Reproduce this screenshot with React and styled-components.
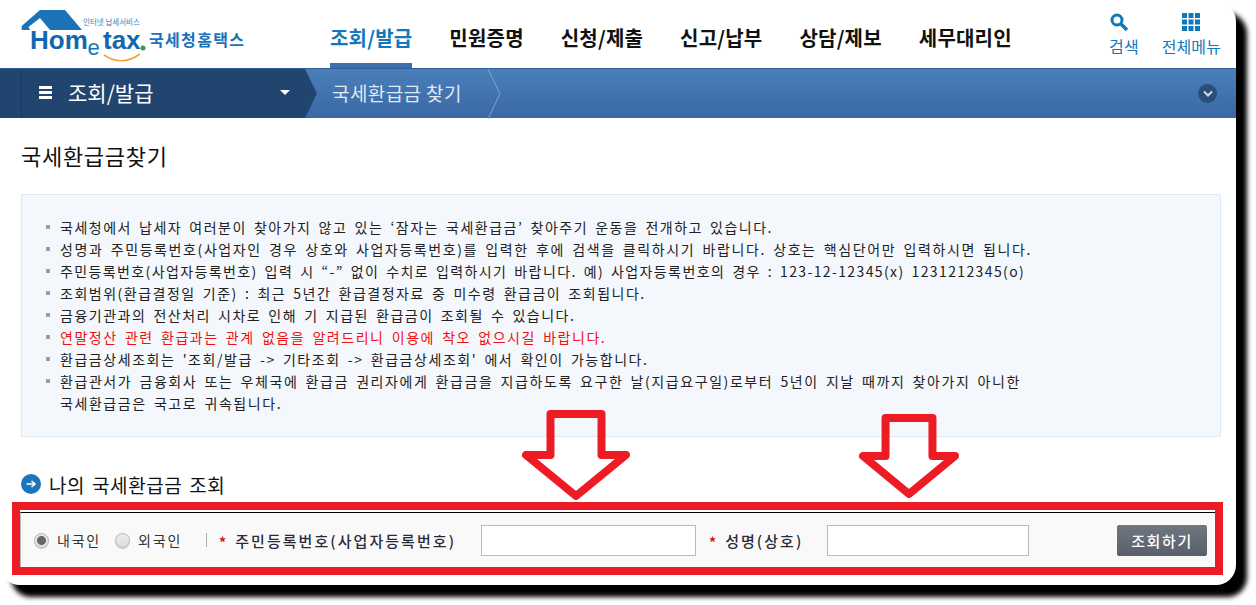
import React from "react";
import styled, { createGlobalStyle } from "styled-components";

const KR = `"Noto Sans CJK KR", "Liberation Sans", sans-serif`;

const GlobalStyle = createGlobalStyle`
  html, body {
    margin: 0;
    height: 100%;
    background: #fff;
    overflow: hidden;
  }
  body {
    font-family: ${KR};
  }
`;

const Card = styled.div`
  width: 1236px;
  height: 585px;
  background: #fff;
  border-radius: 0 22px 20px 20px;
  box-shadow: 11px 12px 5px #000;
  overflow: hidden;
`;

const Header = styled.header`
  display: flex;
  height: 68px;
  padding-left: 20px;
  align-items: stretch;
`;

const LogoBox = styled.div`
  width: 310px;
  flex: none;
`;

const Nav = styled.nav`
  display: flex;
  gap: 37px;
  flex: 1;
`;

const NavItem = styled.a`
  display: flex;
  align-items: center;
  height: 68px;
  padding-top: 12px;
  box-sizing: border-box;
  font-size: 20px;
  font-weight: 700;
  letter-spacing: 0.2px;
  color: ${(p) => (p.$active ? "#1278bd" : "#111")};
  border-bottom: ${(p) => (p.$active ? "5px solid #3f70ae" : "0")};
  padding-bottom: ${(p) => (p.$active ? "0" : "5px")};
`;

const Tools = styled.div`
  display: flex;
  gap: 23px;
  padding: 13px 15px 0 0;
`;

const Tool = styled.a`
  display: flex;
  flex-direction: column;
  align-items: center;
  gap: 5px;
  font-size: 16px;
  letter-spacing: 0.1px;
  line-height: 20px;
  color: #1278bd;
`;

const SearchGlyph = styled.svg`
  margin-right: 10px;
`;

const SubNav = styled.div`
  display: flex;
  align-items: center;
  height: 50px;
  background: linear-gradient(#4a7fba, #3a68a4);
  border-top: 1px solid #2f5f96;
  box-sizing: border-box;
  padding-right: 19px;
`;

const MenuPanel = styled.div`
  display: flex;
  align-items: center;
  width: 318px;
  height: 100%;
  flex: none;
  box-sizing: border-box;
  padding: 0 0 3px 39px;
  background: linear-gradient(90deg, #21456f 21px, #1b3a60 21px, #1b3a60 22px, #21456f 22px);
  color: #fff;
  font-size: 21px;
  clip-path: polygon(0 0, 305px 0, 317px 50%, 305px 100%, 0 100%);
`;

const Burger = styled.span`
  width: 13px;
  height: 3px;
  margin-right: 16px;
  background: #fff;
  box-shadow: 0 -5px 0 #fff, 0 5px 0 #fff;
`;

const MenuTitle = styled.span`
  flex: none;
  width: 212px;
`;

const Caret = styled.span`
  width: 0;
  height: 0;
  border: 5px solid transparent;
  border-top: 5px solid #fff;
  border-bottom: 0;
`;

const Crumb = styled.span`
  margin-left: 14px;
  padding-bottom: 3px;
  width: 155px;
  color: #dfe9f5;
  font-size: 19px;
  letter-spacing: 0.4px;
  flex: none;
`;

const RoundBtn = styled.span`
  display: flex;
  align-items: center;
  justify-content: center;
  width: 19px;
  height: 19px;
  margin-left: auto;
  border-radius: 50%;
  background: #2a4d7b;
`;

const Main = styled.main`
  padding: 0 15px 0 21px;
`;

const Title = styled.h1`
  margin: 0;
  padding-top: 22px;
  height: 76px;
  box-sizing: border-box;
  font-size: 22px;
  line-height: 30px;
  letter-spacing: 0.7px;
  font-weight: 400;
  color: #111;
`;

const InfoBox = styled.div`
  height: 243px;
  box-sizing: border-box;
  padding: 21px 0 0 24px;
  background: #f4f7fc;
  border: 1px solid #dfe8f3;
`;

const InfoList = styled.ul`
  margin: 0;
  padding: 0;
  list-style: none;
`;

const InfoItem = styled.li`
  position: relative;
  padding-left: 14px;
  font-size: 14px;
  line-height: 22px;
  letter-spacing: ${(p) => p.$ls || 1.6}px;
  word-spacing: 2.5px;
  color: ${(p) => (p.$alert ? "#f01010" : "#222")};
  white-space: nowrap;

  &::before {
    content: "";
    position: absolute;
    left: 0;
    top: 9px;
    width: 4px;
    height: 4px;
    background: #9aa0a6;
  }
`;

const Lookup = styled.section`
  position: relative;
`;

const SectionHead = styled.h2`
  display: flex;
  align-items: center;
  gap: 8px;
  height: 65px;
  margin: 0;
  padding-top: 29px;
  box-sizing: border-box;
  font-size: 19px;
  letter-spacing: 0.6px;
  word-spacing: 2px;
  font-weight: 400;
  color: #111;
`;

const ArrowMark = styled.svg`
  position: absolute;
  top: ${(p) => p.$top}px;
  left: ${(p) => p.$left}px;
`;

const RedFrame = styled.div`
  margin-left: -9px;
  width: 1211px;
  height: 73px;
  box-sizing: border-box;
  border: 8px solid #ed1c24;
`;

const FormRow = styled.form`
  display: flex;
  align-items: center;
  height: 55px;
  margin-top: 2px;
  box-sizing: border-box;
  padding: 0 8px 0 13px;
  background: #f9f9f9;
  border-top: 1px solid #000;
  border-left: 1px solid #bbb;
`;

const RadioLabel = styled.label`
  display: flex;
  align-items: center;
  gap: 8px;
  margin-right: ${(p) => p.$gap}px;
  font-size: 14px;
  letter-spacing: 1.8px;
  color: #333;
`;

const Radio = styled.input`
  appearance: none;
  width: 15px;
  height: 15px;
  margin: 0;
  border-radius: 50%;
  border: 1px solid #b5b5b5;
  box-shadow: 0 1px 1px #ccc;
  background: ${(p) =>
    p.checked
      ? "radial-gradient(circle, #666 0 4px, #e4e4e4 5px)"
      : "linear-gradient(#ececec, #dcdcdc)"};
`;

const Divider = styled.span`
  width: 1px;
  height: 14px;
  margin-right: 12px;
  background: #aaa;
`;

const Star = styled.span`
  color: #d5121a;
  font-size: 14px;
  font-weight: 700;
  padding-top: 4px;
  margin-right: 9px;
`;

const FieldLabel = styled.label`
  font-size: 15px;
  font-weight: 500;
  letter-spacing: 2.05px;
  color: #2a2a3a;
  margin-right: ${(p) => p.$gap}px;
  white-space: nowrap;
`;

const TextInput = styled.input`
  width: ${(p) => p.$width}px;
  height: 31px;
  box-sizing: border-box;
  margin-right: ${(p) => p.$gap}px;
  border: 1px solid #bbb;
  background: #fff;
`;

const SearchButton = styled.button`
  width: 90px;
  height: 31px;
  margin-left: auto;
  border: 0;
  border-radius: 2px;
  background: linear-gradient(#6f7680, #5a606b);
  color: #fff;
  font-family: ${KR};
  font-size: 15px;
  font-weight: 500;
  letter-spacing: 1.6px;
`;

const Logo = () => (
  <svg width="240" height="64" viewBox="0 0 240 64">
    <path d="M1.7 26 L20 10 L45 10 L62 30 L30 30 L20 18 L8.5 27 L10 30 L1.7 30 Z" fill="#1a72b8" />
    <text x="63" y="25" fontSize="7.5" fill="#3a7fc0" fontFamily={KR}>
      인터넷 납세서비스
    </text>
    <text x="10" y="49" fontSize="26" fontWeight="700" fill="#1268b0" fontFamily="Liberation Sans">
      Hom
    </text>
    <text x="67.5" y="55" fontSize="22" fill="#1278bd" fontFamily="Liberation Sans">
      e
    </text>
    <text x="83" y="49" fontSize="26" fontWeight="700" fill="#1268b0" fontFamily="Liberation Sans">
      tax
    </text>
    <circle cx="123" cy="48" r="2.5" fill="#3a9a3a" />
    <path d="M84 55 Q102 67 120 54" fill="none" stroke="#f3a63a" strokeWidth="1.6" />
    <text x="129" y="46" fontSize="16" fontWeight="700" fill="#1a72b8" fontFamily={KR} textLength="95">
      국세청홈택스
    </text>
  </svg>
);

const SearchIcon = () => (
  <SearchGlyph width="18" height="18" viewBox="0 0 18 18">
    <circle cx="7" cy="7" r="5" fill="none" stroke="#1278bd" strokeWidth="3" />
    <path d="M11 11 L17 17" stroke="#1278bd" strokeWidth="3.5" />
  </SearchGlyph>
);

const GridIcon = () => (
  <svg width="18" height="18" viewBox="0 0 18 18" fill="#1278bd">
    {[0, 6.5, 13].map((y) =>
      [0, 6.5, 13].map((x) => <rect key={`${x}-${y}`} x={x} y={y} width="5" height="5" />)
    )}
  </svg>
);

const BlockArrow = ({ top, left, width, height }) => {
  const w = width - 8;
  const h = height - 8;
  const shaft = w * 0.245;
  const neck = h * 0.5;
  return (
    <ArrowMark $top={top} $left={left} width={width} height={height} viewBox={`0 0 ${width} ${height}`}>
      <path
        transform="translate(4 4)"
        d={`M${shaft} 0 H${w - shaft} V${neck} H${w} L${w / 2} ${h} L0 ${neck} H${shaft} Z`}
        fill="none"
        stroke="#ed1c24"
        strokeWidth="8"
        strokeLinejoin="round"
      />
    </ArrowMark>
  );
};

const notices = [
  { text: "국세청에서 납세자 여러분이 찾아가지 않고 있는 ‘잠자는 국세환급금’ 찾아주기 운동을 전개하고 있습니다.", ls: 1.5 },
  { text: "성명과 주민등록번호(사업자인 경우 상호와 사업자등록번호)를 입력한 후에 검색을 클릭하시기 바랍니다. 상호는 핵심단어만 입력하시면 됩니다." },
  { text: "주민등록번호(사업자등록번호) 입력 시 “-” 없이 수치로 입력하시기 바랍니다. 예) 사업자등록번호의 경우 : 123-12-12345(x) 1231212345(o)", ls: 1.38 },
  { text: "조회범위(환급결정일 기준) : 최근 5년간 환급결정자료 중 미수령 환급금이 조회됩니다.", ls: 1.5 },
  { text: "금융기관과의 전산처리 시차로 인해 기 지급된 환급금이 조회될 수 있습니다.", ls: 1.5 },
  { text: "연말정산 관련 환급과는 관계 없음을 알려드리니 이용에 착오 없으시길 바랍니다.", ls: 1.55, alert: true },
  { text: "환급금상세조회는 '조회/발급 -> 기타조회 -> 환급금상세조회' 에서 확인이 가능합니다.", ls: 1.55 },
];

const menus = ["조회/발급", "민원증명", "신청/제출", "신고/납부", "상담/제보", "세무대리인"];

export default function App() {
  return (
    <>
      <GlobalStyle />
      <Card>
        <Header>
          <LogoBox>
            <Logo />
          </LogoBox>
          <Nav>
            {menus.map((m, i) => (
              <NavItem key={m} $active={i === 0}>
                {m}
              </NavItem>
            ))}
          </Nav>
          <Tools>
            <Tool>
              <SearchIcon />
              검색
            </Tool>
            <Tool>
              <GridIcon />
              전체메뉴
            </Tool>
          </Tools>
        </Header>
        <SubNav>
          <MenuPanel>
            <Burger />
            <MenuTitle>조회/발급</MenuTitle>
            <Caret />
          </MenuPanel>
          <Crumb>국세환급금 찾기</Crumb>
          <svg width="14" height="50" viewBox="0 0 14 50">
            <path d="M1 0 L13 25 L1 50" fill="none" stroke="#7ea5d2" strokeWidth="1" />
          </svg>
          <RoundBtn>
            <svg width="10" height="8" viewBox="0 0 10 8">
              <path d="M1 1.5 L5 5.5 L9 1.5" fill="none" stroke="#cfd8e4" strokeWidth="2" />
            </svg>
          </RoundBtn>
        </SubNav>
        <Main>
          <Title>국세환급금찾기</Title>
          <InfoBox>
            <InfoList>
              {notices.map((n) => (
                <InfoItem key={n.text} $alert={n.alert} $ls={n.ls}>
                  {n.text}
                </InfoItem>
              ))}
              <InfoItem $ls={1.57}>
                환급관서가 금융회사 또는 우체국에 환급금 권리자에게 환급금을 지급하도록 요구한 날(지급요구일)로부터 5년이 지날 때까지 찾아가지 아니한
                <br />
                국세환급금은 국고로 귀속됩니다.
              </InfoItem>
            </InfoList>
          </InfoBox>
          <Lookup>
            <SectionHead>
              <svg width="20" height="20" viewBox="0 0 20 20">
                <circle cx="10" cy="10" r="10" fill="#1a76b8" />
                <path d="M5.5 10 H13.5 M10.5 7 L14 10 L10.5 13" fill="none" stroke="#fff" strokeWidth="1.6" />
              </svg>
              나의 국세환급금 조회
            </SectionHead>
            <RedFrame>
              <FormRow>
                <RadioLabel $gap={14}>
                  <Radio type="radio" name="kind" checked readOnly />
                  내국인
                </RadioLabel>
                <RadioLabel $gap={24}>
                  <Radio type="radio" name="kind" readOnly />
                  외국인
                </RadioLabel>
                <Divider />
                <Star>*</Star>
                <FieldLabel $gap={25}>주민등록번호(사업자등록번호)</FieldLabel>
                <TextInput $width={215} $gap={13} />
                <Star>*</Star>
                <FieldLabel $gap={24}>성명(상호)</FieldLabel>
                <TextInput $width={202} $gap={0} />
                <SearchButton type="button">조회하기</SearchButton>
              </FormRow>
            </RedFrame>
            <BlockArrow top={-27} left={501} width={108} height={90} />
            <BlockArrow top={-23} left={838} width={100} height={84} />
          </Lookup>
        </Main>
      </Card>
    </>
  );
}
